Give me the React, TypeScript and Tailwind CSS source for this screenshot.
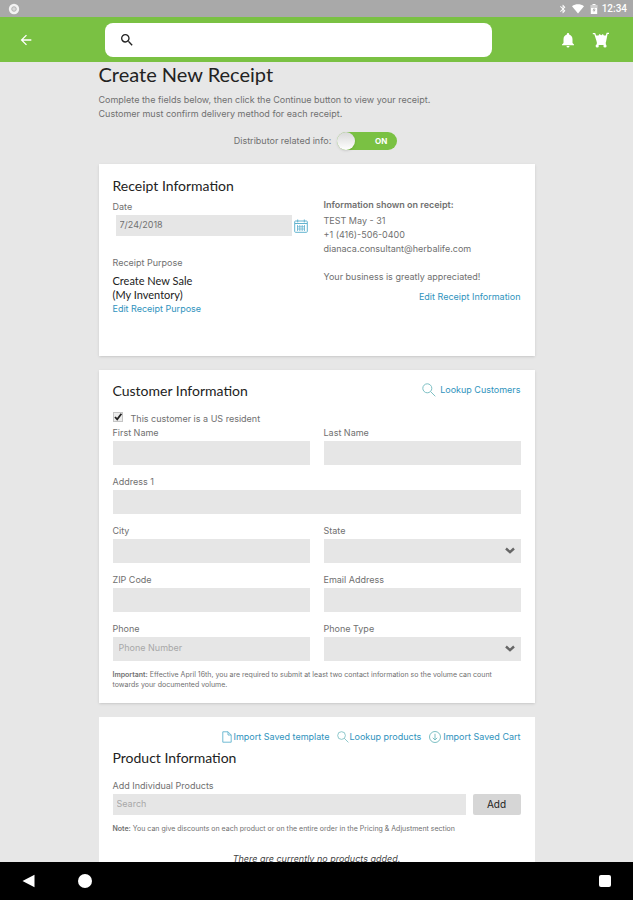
import { useId, useState } from "react";
import { MdArrowBack, MdBluetooth, MdNotifications, MdSearch } from "react-icons/md";

interface FieldProps {
  label: string;
  placeholder?: string;
  className?: string;
}

const LINK = "text-[#2f93bd] hover:underline";
const HEADING = "font-[Lato,sans-serif] text-[14px] leading-5 text-[#222]";

function TextField({ label, placeholder, className = "" }: FieldProps) {
  const id = useId();
  return (
    <div className={className}>
      <label htmlFor={id} className="mb-px block">
        {label}
      </label>
      <input
        id={id}
        type="text"
        placeholder={placeholder}
        className="block h-6 w-full bg-[#e6e6e6] px-1.5 pb-1 text-[9px] placeholder:text-[#a8a8a8] focus:outline-none"
      />
    </div>
  );
}

function SelectField({ label }: FieldProps) {
  const id = useId();
  return (
    <div>
      <label htmlFor={id} className="mb-px block">
        {label}
      </label>
      <div className="relative">
        <select id={id} className="block h-6 w-full appearance-none bg-[#e6e6e6] px-1.5 focus:outline-none">
          <option value="" />
        </select>
        <svg className="pointer-events-none absolute top-2 right-1.5 h-2 w-2.5" viewBox="0 0 10 8" fill="none">
          <path d="M1 1.5 L5 5.2 L9 1.5" stroke="#666" strokeWidth="2.4" />
        </svg>
      </div>
    </div>
  );
}

function Lens({ className = "" }: { className?: string }) {
  return (
    <svg className={className} viewBox="0 0 14 14" fill="none" stroke="#6fb9bd" strokeWidth="0.9">
      <circle cx="5.3" cy="5.3" r="4.5" />
      <path d="M8.6 8.6 L13.3 13.3" />
    </svg>
  );
}

function StatusBar() {
  return (
    <div className="flex h-[17px] shrink-0 items-center justify-between bg-[#a9a9a9] pr-1.5 pl-2 text-white">
      <svg className="h-3 w-3" viewBox="0 0 12 12">
        <circle cx="6" cy="6" r="5.2" fill="#f3f3f3" />
        <circle cx="6" cy="6" r="2.3" fill="#d8d8d8" stroke="#a9a9a9" strokeWidth="0.8" />
      </svg>
      <div className="flex items-center">
        <MdBluetooth className="mr-1 h-2.5 w-2.5" />
        <svg className="mr-1.5 h-2.5 w-3" viewBox="0 0 12 10" fill="currentColor">
          <path d="M0 2.2 C3.5 -0.4 8.5 -0.4 12 2.2 L6 9.6 Z" />
        </svg>
        <svg className="mr-1 h-2.5 w-2" viewBox="1 0 8 10">
          <path d="M3.5 0 h3 v1 h1.7 v9 h-6.4 v-9 h1.7 z" fill="#fff" />
          <path d="M1.8 1 h6.4 v3 h-6.4 z" fill="#cfcfcf" />
          <path d="M5.4 3.5 L3.5 6.4 h1.3 L4.6 8.5 L6.7 5.6 H5.3 z" fill="#a9a9a9" />
        </svg>
        <span className="font-[Roboto,sans-serif] text-[10px] leading-3 font-medium">12:34</span>
      </div>
    </div>
  );
}

function Header() {
  return (
    <header className="flex h-[45px] shrink-0 items-center bg-[#7ac143] pt-px text-white">
      <button type="button" aria-label="Back" className="ml-[18px] shrink-0">
        <MdArrowBack className="h-4 w-4" />
      </button>
      <div className="mr-[67px] ml-[71px] flex h-[34px] flex-1 items-center rounded-lg bg-white pl-[14px]">
        <MdSearch className="h-4 w-4 shrink-0 text-[#222]" />
        <input type="search" aria-label="Search" className="h-full min-w-0 flex-1 px-2 text-sm text-[#222] focus:outline-none" />
      </div>
      <button type="button" aria-label="Notifications" className="mr-[15px] shrink-0">
        <MdNotifications className="h-[18px] w-[18px]" />
      </button>
      <button type="button" aria-label="Cart" className="mr-[23px] shrink-0">
        <svg className="h-[18px] w-[18px]" viewBox="0 0 18 18" fill="currentColor">
          <path d="M0.8 2 h2.4 l0.9 2.6 h2.4 l1 -1.5 l1.8 1.2 l1.6 -1.2 l1 1.5 h1.8 l1 -2.8 h2.3 v1.1 h-1.4 l-1.6 8 H4.8 L2.3 3.2 H0.8 z" />
          <path d="M4.8 10.5 h9 v3.5 h-9 z" />
          <circle cx="5.2" cy="14.9" r="1.6" />
          <circle cx="13" cy="14.9" r="1.6" />
        </svg>
      </button>
    </header>
  );
}

function ReceiptCard() {
  return (
    <section className="grid grid-cols-2 gap-x-3.5 bg-white px-3.5 pt-3 pb-10 shadow-sm">
      <div>
        <h2 className={HEADING}>Receipt Information</h2>
        <label htmlFor="date" className="mt-1 block">
          Date
        </label>
        <div className="flex items-center pt-px pr-0.5 pl-[3px]">
          <input
            id="date"
            type="text"
            defaultValue="7/24/2018"
            className="h-[21px] min-w-0 flex-1 bg-[#e6e6e6] px-1 pb-0.5 text-[9px] focus:outline-none"
          />
          <button type="button" aria-label="Pick a date" className="ml-0.5">
            <svg className="h-3.5 w-3.5" viewBox="0 0 14 14" fill="none" stroke="#62b3cf">
              <rect x="0.7" y="2" width="12.6" height="11.3" rx="0.8" />
              <path d="M1 4.5 H13 M3.7 0.5 V3.4 M10.3 0.5 V3.4" />
              <path d="M3.5 6 V12 M5.8 6 V12 M8.2 6 V12 M10.5 6 V12 M3 7.8 H11 M3 10 H11" strokeWidth="0.8" />
            </svg>
          </button>
        </div>
        <p className="mt-5">Receipt Purpose</p>
        <p className="mt-1 font-[Lato,sans-serif] text-[11px] text-[#222]">
          Create New Sale
          <br />
          (My Inventory)
        </p>
        <a href="#purpose" className={`block ${LINK}`}>
          Edit Receipt Purpose
        </a>
      </div>
      <div className="pt-[22px]">
        <p className="font-semibold">Information shown on receipt:</p>
        <p className="mt-0.5">
          TEST May - 31
          <br />
          +1 (416)-506-0400
          <br />
          dianaca.consultant@herbalife.com
        </p>
        <p className="mt-3.5">Your business is greatly appreciated!</p>
        <a href="#receipt" className={`mt-1.5 block text-right ${LINK}`}>
          Edit Receipt Information
        </a>
      </div>
    </section>
  );
}

function CustomerCard() {
  const [resident, setResident] = useState(true);

  return (
    <section className="mt-3.5 bg-white px-3.5 pt-[11px] pb-[13px] shadow-sm">
      <div className="flex items-start justify-between">
        <h2 className={HEADING}>Customer Information</h2>
        <a href="#customers" className={`flex items-center gap-1 pt-0.5 ${LINK}`}>
          <Lens className="h-3.5 w-3.5" />
          Lookup Customers
        </a>
      </div>
      <label className="mt-[11px] flex items-start gap-2">
        <span className="relative h-2.5 w-2.5">
          <input
            type="checkbox"
            checked={resident}
            onChange={(e) => setResident(e.target.checked)}
            className="block h-2.5 w-2.5 appearance-none border border-[#c4c4c4] bg-[#ececec]"
          />
          {resident && (
            <svg className="pointer-events-none absolute inset-0 h-2.5 w-2.5" viewBox="0 0 10 10" fill="none">
              <path d="M2 5 L4.2 7.4 L8.4 1.8" stroke="#222" strokeWidth="1.8" />
            </svg>
          )}
        </span>
        This customer is a US resident
      </label>
      <div className="grid grid-cols-2 gap-x-3.5 gap-y-2.5">
        <TextField label="First Name" />
        <TextField label="Last Name" />
        <TextField label="Address 1" className="col-span-2" />
        <TextField label="City" />
        <SelectField label="State" />
        <TextField label="ZIP Code" />
        <TextField label="Email Address" />
        <TextField label="Phone" placeholder="Phone Number" />
        <SelectField label="Phone Type" />
      </div>
      <p className="mt-[9px] pr-5 text-[7px] leading-[10px]">
        <b className="font-semibold">Important:</b> Effective April 16th, you are required to submit at least two contact
        information so the volume can count towards your documented volume.
      </p>
    </section>
  );
}

function ProductCard() {
  return (
    <section className="mt-3.5 bg-white px-3.5 pt-[13px] pb-6">
      <div className="flex justify-end gap-2">
        <a href="#template" className={`flex items-center ${LINK}`}>
          <svg className="mr-px h-3 w-2.5" viewBox="0 0 10 12" fill="none" stroke="#62b3cf" strokeWidth="0.9">
            <path d="M0.8 0.8 H6 L9.2 4 V11.2 H0.8 Z M6 0.8 V4 H9.2" />
          </svg>
          Import Saved template
        </a>
        <a href="#products" className={`flex items-center ${LINK}`}>
          <Lens className="h-3 w-3" />
          Lookup products
        </a>
        <a href="#cart" className={`flex items-center ${LINK}`}>
          <svg className="mr-0.5 h-3 w-3" viewBox="0 0 12 12" fill="none" stroke="#6fb9bd" strokeWidth="0.9">
            <circle cx="6" cy="6" r="5.5" />
            <path d="M6 2.8 V9 M3.8 6.8 L6 9 L8.2 6.8" />
          </svg>
          Import Saved Cart
        </a>
      </div>
      <h2 className={`mt-1 ${HEADING}`}>Product Information</h2>
      <label htmlFor="product" className="mt-[11px] block">
        Add Individual Products
      </label>
      <div className="mt-px flex gap-[7px]">
        <input
          id="product"
          type="text"
          placeholder="Search"
          className="h-[21px] min-w-0 flex-1 bg-[#e6e6e6] px-1 pb-0.5 text-[9px] placeholder:text-[#a8a8a8] focus:outline-none"
        />
        <button type="button" className="h-[21px] w-12 rounded-xs bg-[#d6d6d6] pb-0.5 text-[10px] text-[#222]">
          Add
        </button>
      </div>
      <p className="mt-[9px] text-[7px] leading-[10px]">
        <b className="font-semibold">Note:</b> You can give discounts on each product or on the entire order in the Pricing
        &amp; Adjustment section
      </p>
      <p className="mt-[18px] text-center text-[#444] italic">There are currently no products added.</p>
    </section>
  );
}

export default function App() {
  const [related, setRelated] = useState(true);

  return (
    <div className="flex h-screen flex-col overflow-hidden bg-[#e7e7e7] font-[Inter,sans-serif] text-[9px] leading-[14px] text-[#707070]">
      <StatusBar />
      <Header />
      <main className="min-h-0 flex-1 overflow-hidden">
        <div className="mx-auto w-full max-w-[436px]">
          <h1 className="font-[Lato,sans-serif] text-[20px] leading-6 text-[#222]">Create New Receipt</h1>
          <p className="mt-[7px]">
            Complete the fields below, then click the Continue button to view your receipt.
            <br />
            Customer must confirm delivery method for each receipt.
          </p>
          <div className="mt-[11px] mb-3.5 flex items-center justify-center gap-1.5 pr-0.5">
            <span id="related">Distributor related info:</span>
            <button
              type="button"
              role="switch"
              aria-checked={related}
              aria-labelledby="related"
              onClick={() => setRelated(!related)}
              className="flex h-[18px] w-[60px] items-center justify-between rounded-full bg-[#7ac143] pr-2.5 text-[8px] font-bold text-white"
            >
              <span className="h-[18px] w-[18px] rounded-full bg-linear-to-b from-[#d9d9d9] to-white shadow-sm" />
              {related ? "ON" : "OFF"}
            </button>
          </div>
          <ReceiptCard />
          <CustomerCard />
          <ProductCard />
        </div>
      </main>
      <nav className="flex h-[38px] shrink-0 items-center bg-black px-[22px]">
        <button type="button" aria-label="Back">
          <svg className="h-3.5 w-3.5" viewBox="0 0 14 14" fill="#fff">
            <path d="M12.5 0.8 V13.2 L0.5 7 Z" />
          </svg>
        </button>
        <button type="button" aria-label="Home" className="ml-[42px] h-3.5 w-3.5 rounded-full bg-white" />
        <button type="button" aria-label="Overview" className="ml-auto h-3 w-3 rounded-xs bg-white" />
      </nav>
    </div>
  );
}
